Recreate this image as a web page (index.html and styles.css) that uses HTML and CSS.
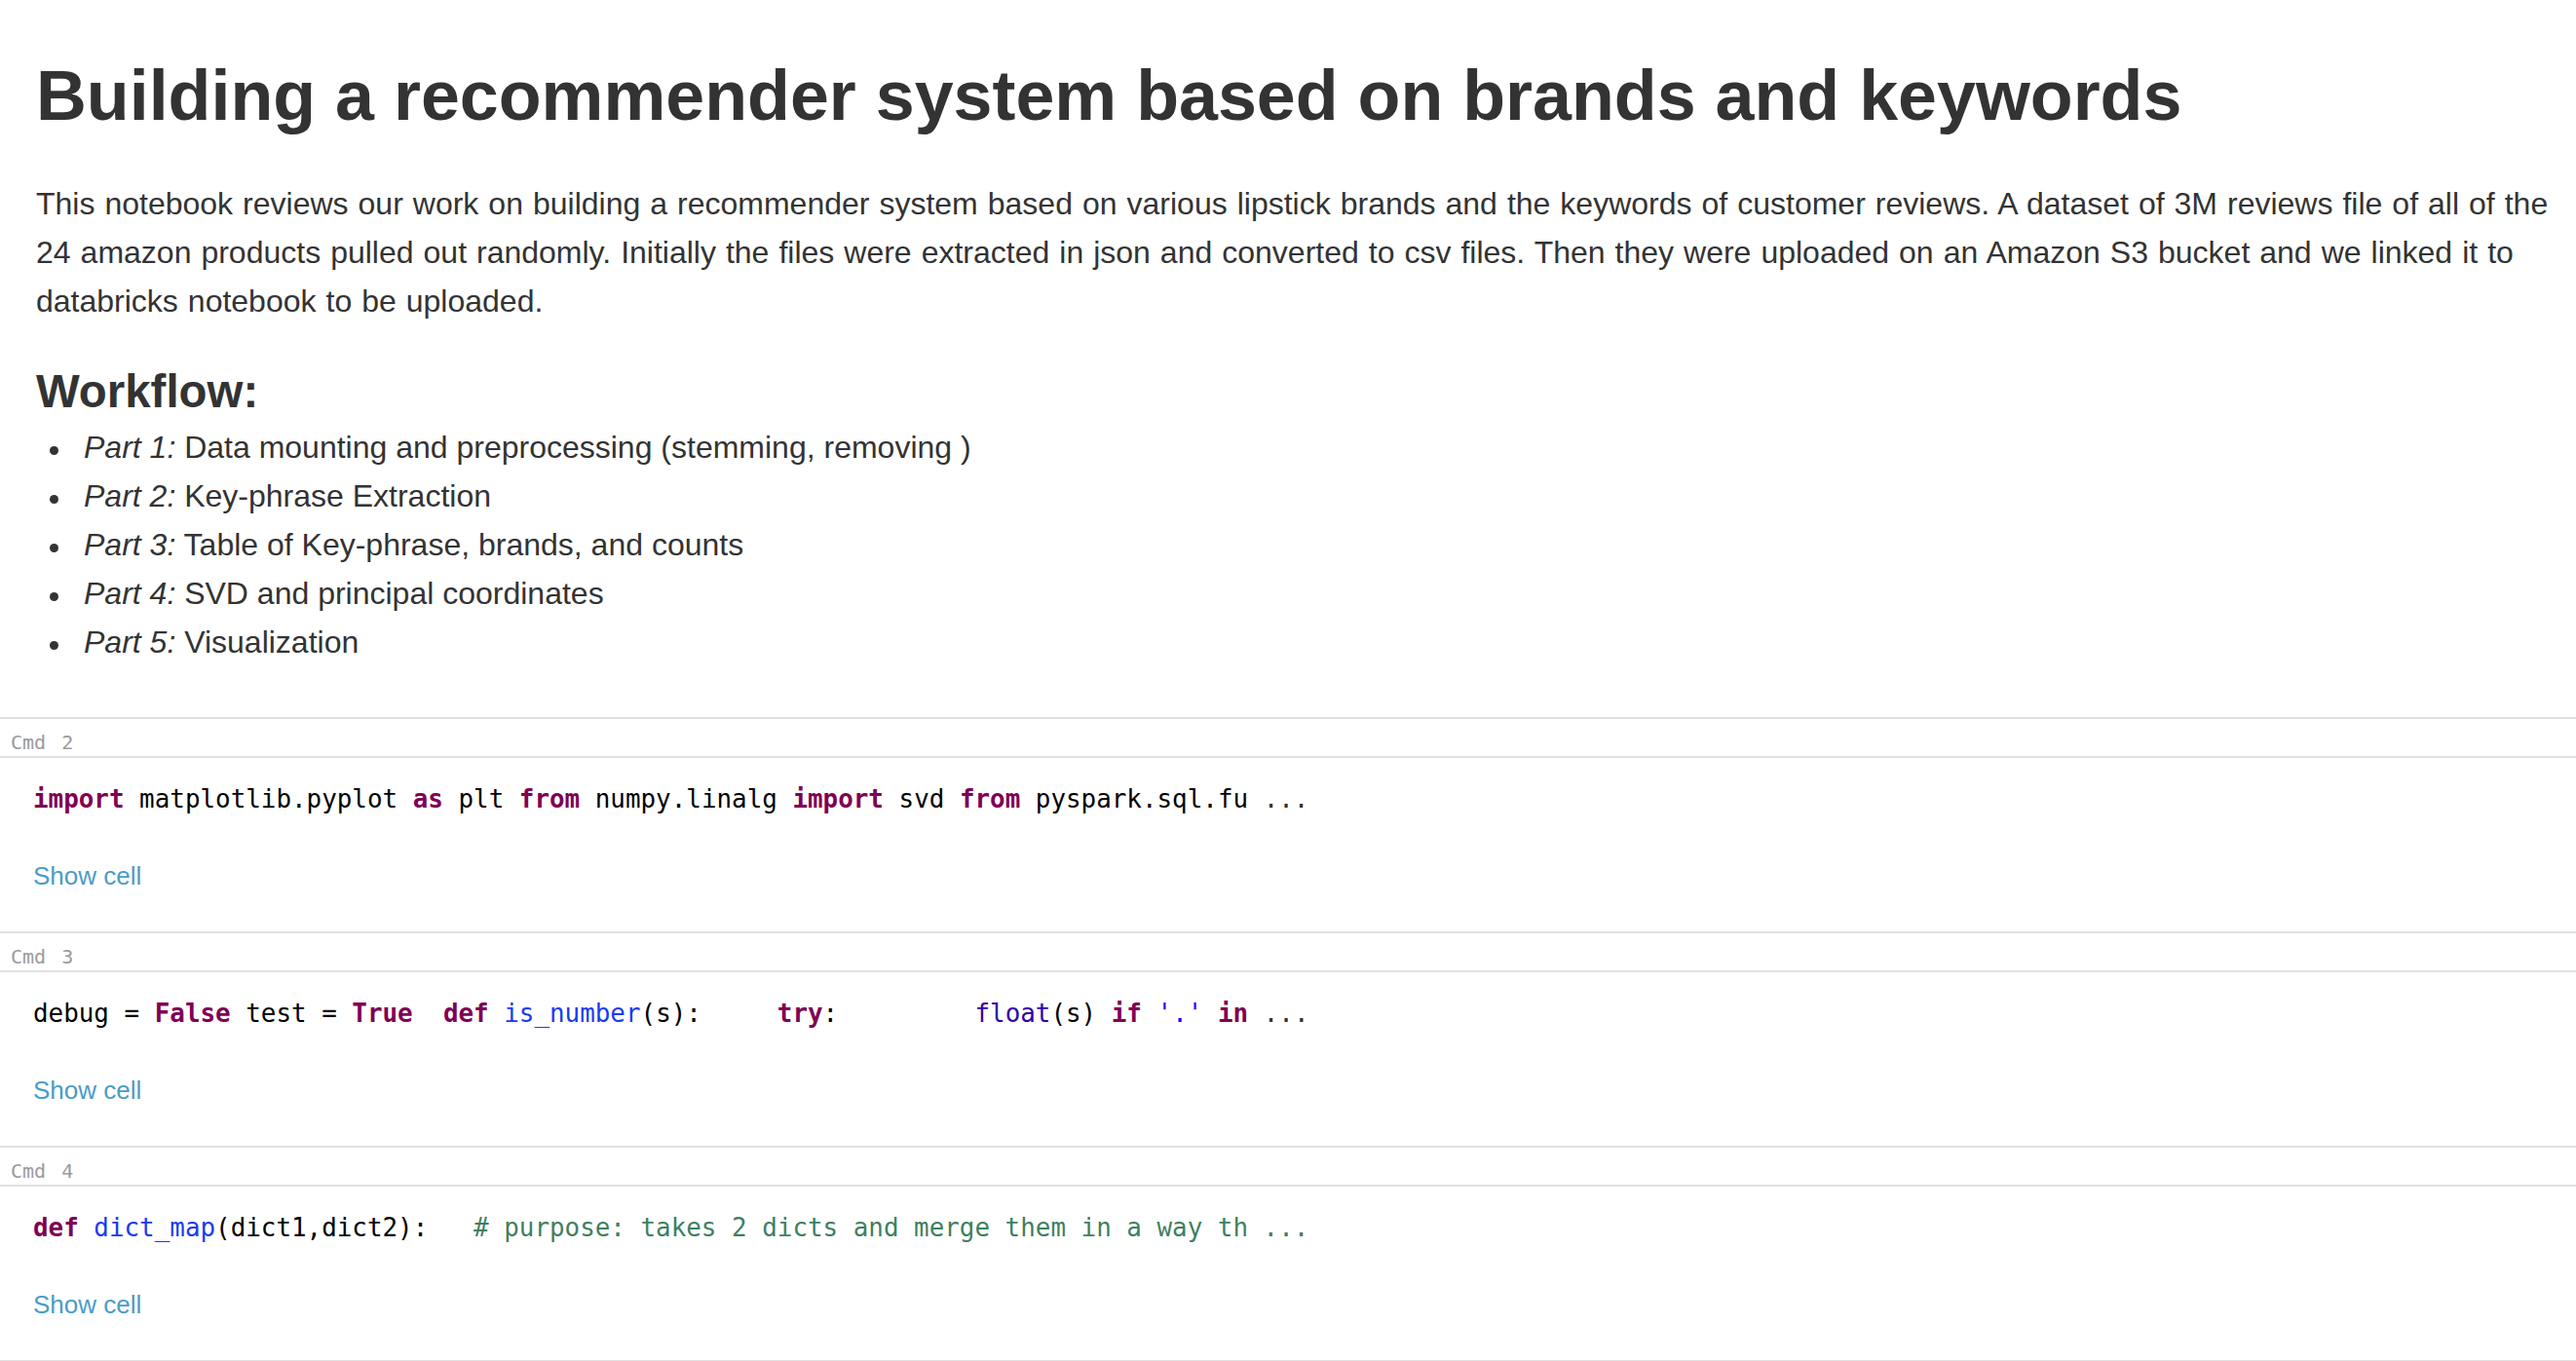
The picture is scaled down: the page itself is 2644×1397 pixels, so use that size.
FILE: index.html
```html
<!DOCTYPE html>
<html lang="en">
<head>
<meta charset="utf-8">
<title>Notebook</title>
<link rel="stylesheet" href="styles.css">
</head>
<body>
<div class="notebook">
  <section class="md-cell">
    <h1 class="title">Building a recommender system based on brands and keywords</h1>
    <p class="intro">This notebook reviews our work on building a recommender system based on various lipstick brands and the keywords of customer reviews. A dataset of 3M reviews file of all of the 24 amazon products pulled out randomly. Initially the files were extracted in json and converted to csv files. Then they were uploaded on an Amazon S3 bucket and we linked it to databricks notebook to be uploaded.</p>
    <h3 class="subhead">Workflow:</h3>
    <ul class="steps">
      <li><span><em>Part 1:</em> Data mounting and preprocessing (stemming, removing )</span></li>
      <li><span><em>Part 2:</em> Key-phrase Extraction</span></li>
      <li><span><em>Part 3:</em> Table of Key-phrase, brands, and counts</span></li>
      <li><span><em>Part 4:</em> SVD and principal coordinates</span></li>
      <li><span><em>Part 5:</em> Visualization</span></li>
    </ul>
  </section>

  <div class="cmd-label">Cmd 2</div>
  <section class="code-cell">
    <pre class="code"><span class="kw">import</span> matplotlib.pyplot <span class="kw">as</span> plt <span class="kw">from</span> numpy.linalg <span class="kw">import</span> svd <span class="kw">from</span> pyspark.sql.fu <span class="more">...</span></pre>
    <a class="show-cell" href="#">Show cell</a>
  </section>

  <div class="cmd-label">Cmd 3</div>
  <section class="code-cell">
    <pre class="code">debug = <span class="kw">False</span> test = <span class="kw">True</span>  <span class="kw">def</span> <span class="def">is_number</span>(s):     <span class="kw">try</span>:         <span class="builtin">float</span>(s) <span class="kw">if</span> <span class="str">'.'</span> <span class="kw">in</span> <span class="more">...</span></pre>
    <a class="show-cell" href="#">Show cell</a>
  </section>

  <div class="cmd-label">Cmd 4</div>
  <section class="code-cell">
    <pre class="code"><span class="kw">def</span> <span class="def">dict_map</span>(dict1,dict2):   <span class="comment"># purpose: takes 2 dicts and merge them in a way th ...</span></pre>
    <a class="show-cell" href="#">Show cell</a>
  </section>
</div>
</body>
</html>
```

FILE: styles.css
```css
html, body {
  margin: 0;
  padding: 0;
  background: #ffffff;
}

body {
  font-family: "Liberation Sans", Arial, Helvetica, sans-serif;
  color: #333333;
}

.notebook {
  display: flex;
  flex-direction: column;
}

.md-cell {
  padding: 59px 20px 52px 37px;
}

.title {
  margin: 0;
  font-size: 71.8px;
  line-height: 79px;
  font-weight: bold;
  color: #333333;
}

.intro {
  margin: 46px 0 0 0;
  font-size: 32px;
  line-height: 50px;
  word-spacing: 1.1px;
}

.subhead {
  margin: 43px 0 0 0;
  font-size: 47.4px;
  line-height: 50px;
  font-weight: bold;
}

.steps {
  list-style: none;
  margin: 7px 0 0 0;
  padding: 0 0 0 14px;
}

.steps li {
  display: flex;
  align-items: flex-start;
  font-size: 32px;
  line-height: 50px;
}

.steps li::before {
  content: "";
  flex: none;
  width: 9px;
  height: 9px;
  border-radius: 50%;
  background: #333333;
  margin: 24px 26px 0 0;
}

.steps em {
  font-style: italic;
}

.cmd-label {
  border-top: 2px solid #e0e0e0;
  height: 40px;
  box-sizing: border-box;
  padding: 14px 0 0 11px;
  font-family: "DejaVu Sans Mono", "Liberation Mono", monospace;
  font-size: 20px;
  line-height: 20px;
  word-spacing: 4px;
  color: #9a9a9a;
}

.code-cell {
  border-top: 2px solid #e0e0e0;
  height: 180px;
  box-sizing: border-box;
  padding: 27px 0 0 34px;
  display: flex;
  flex-direction: column;
  align-items: flex-start;
}

.code-cell:last-child {
  border-bottom: 2px solid #e0e0e0;
  height: 182px;
}

.code {
  margin: 0;
  font-family: "DejaVu Sans Mono", "Liberation Mono", monospace;
  font-size: 25.9px;
  line-height: 30px;
  color: #000000;
  white-space: pre;
}

.kw {
  color: #7f0055;
  font-weight: bold;
}

.def {
  color: #1a3af0;
}

.builtin {
  color: #3300aa;
}

.str {
  color: #2a00ff;
}

.comment {
  color: #3f7f5f;
}

.more {
  color: #333333;
}

.show-cell {
  margin-top: 49px;
  font-size: 26px;
  line-height: 30px;
  color: #4a9cc6;
  text-decoration: none;
}
```
